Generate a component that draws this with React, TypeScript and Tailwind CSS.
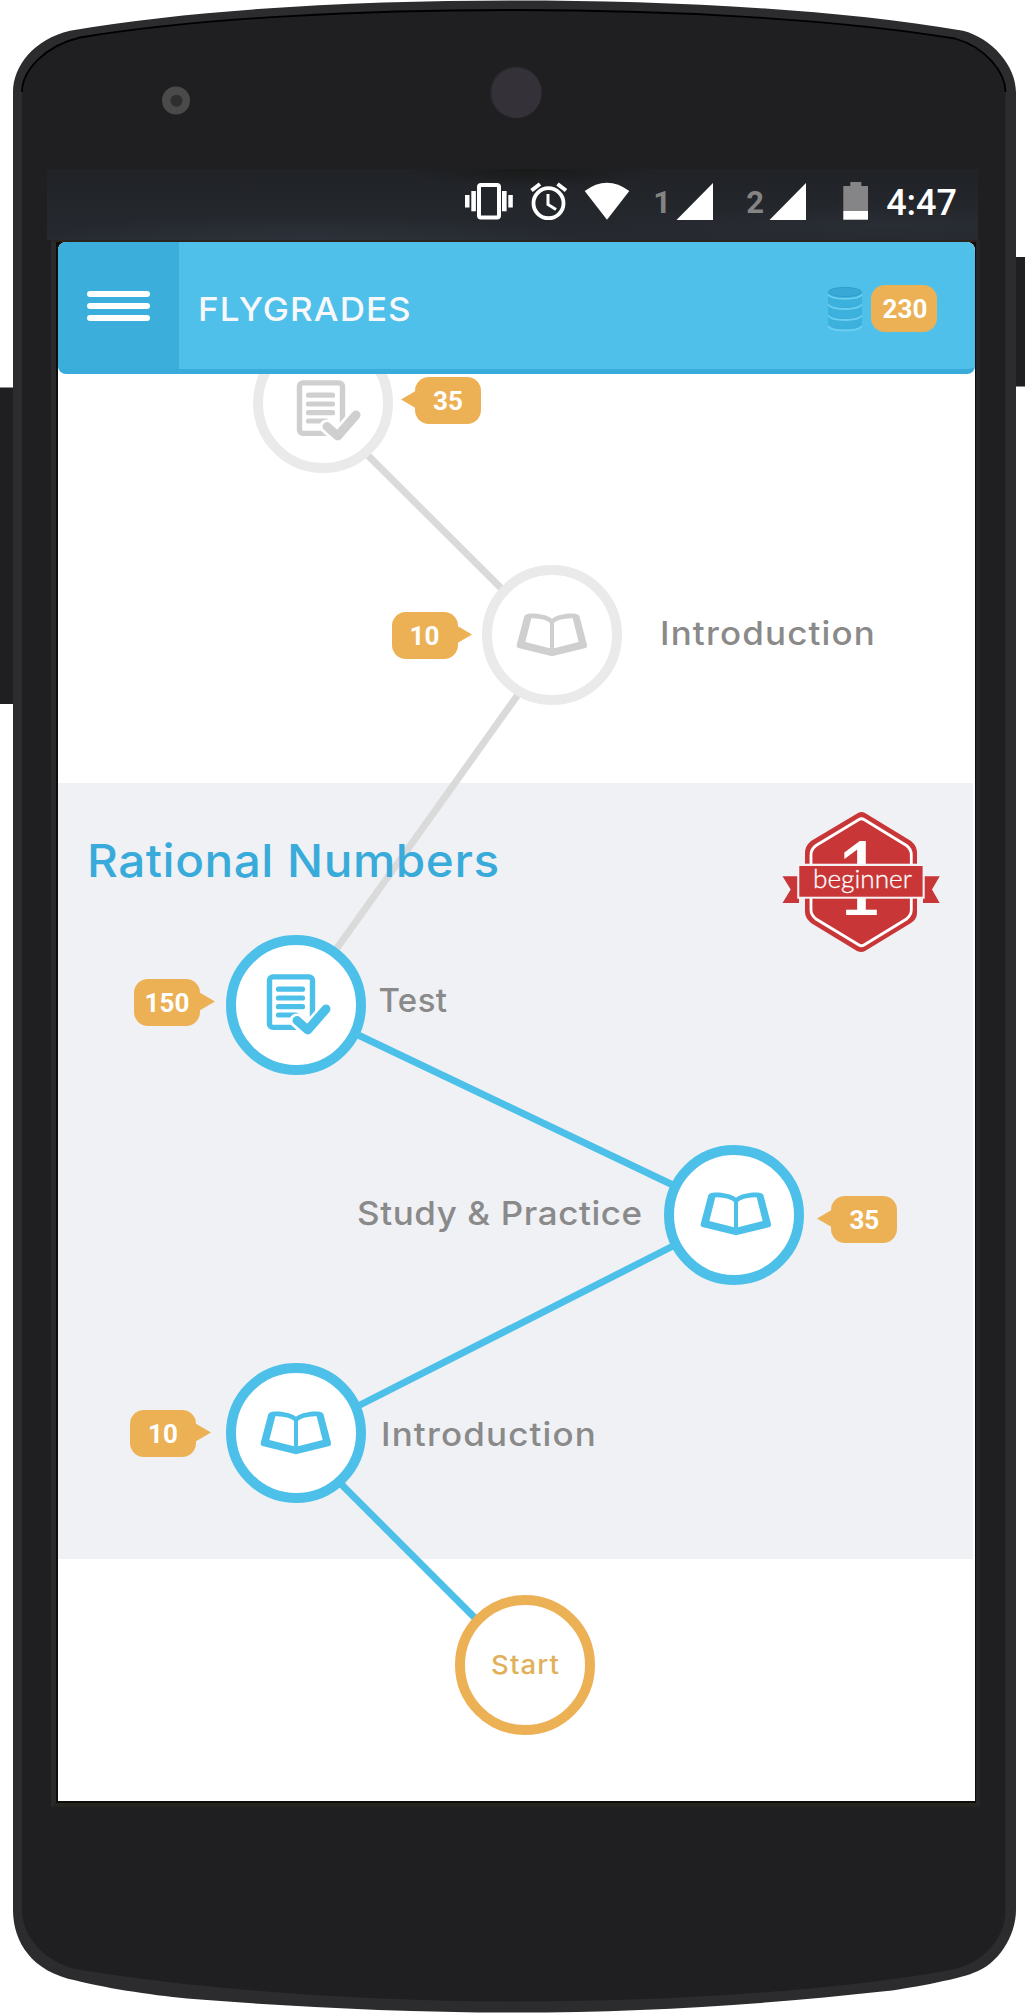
import React from "react";

type Point = { x: number; y: number };

const BLUE = "#4cc0e9";
const LINE_GRAY = "#dadada";

function PhoneBody() {
  return (
    <svg className="absolute inset-0" width="1025" height="2013" viewBox="0 0 1025 2013" aria-hidden="true">
      <rect x="0" y="387.5" width="14" height="316.5" fill="#1f1f21" />
      <rect x="1015" y="257" width="10" height="129.5" fill="#1f1f21" />
      <path
        d="M13 92C13 66 34 39 70 30.7C200 8 370 0.5 515 0.5C660 0.5 830 8 963 30.7C992 38 1016 66 1016 92V1910C1016 1936 998 1965 973 1973C960 1979 900 1990 887 1991C760 2005 640 2012.5 515 2012.5C400 2012.5 280 2006 187 1998.5C150 1995 100 1987 76 1980.5C32 1972 13 1942 13 1910Z"
        fill="#2c2c2e"
      />
      <path
        d="M22 92C22 71 44 46 80 37.5C205 17 370 10 515 10C660 10 830 18 955 38.5C985 47 1005.500 72 1005.500 92V1910C1005.500 1936 986 1962 953 1969.500C830 1992 660 2001.500 515 2001.500C370 2001.500 200 1990 76.700 1969.300C44 1962 22 1936 22 1910Z"
        fill="#1f1f21"
      />
      <path
        d="M22 92C22 71 44 46 80 37.5C205 17 370 10 515 10C660 10 830 18 955 38.5C985 47 1005.500 72 1005.500 92"
        fill="none"
        stroke="#000"
        strokeWidth="1.800"
      />
      <circle cx="516" cy="92.500" r="26" fill="#29282c" />
      <circle cx="516.500" cy="92.700" r="25" fill="#343238" />
      <circle cx="176" cy="100.500" r="14" fill="#4a4a4b" />
      <circle cx="176.500" cy="100.800" r="6" fill="#302e2f" />
    </svg>
  );
}

function SignalIcon() {
  return (
    <svg width="38" height="40" viewBox="0 0 38 40" fill="#fff" aria-hidden="true">
      <path d="M0.500 38L37 1V38Z" />
    </svg>
  );
}

function StatusBar() {
  return (
    <div className="ml-[47px] flex h-[71px] w-[931px] items-start justify-end bg-[radial-gradient(ellipse_at_28%_110%,#2e343c_0%,transparent_30%),radial-gradient(ellipse_at_52%_0%,#181a19_0%,transparent_18%),radial-gradient(ellipse_at_90%_80%,#292d34_0%,transparent_25%),linear-gradient(to_bottom,#202226,#262a30)] pt-[13px] pr-[21px] font-['Roboto']">
      <div className="flex items-start gap-4">
        <svg width="50" height="40" viewBox="465 182 50 40" fill="#fff" aria-hidden="true">
          <rect x="480" y="185" width="20" height="32.500" rx="2" fill="none" stroke="#fff" strokeWidth="4" />
          <rect x="466" y="195" width="4.500" height="12.500" />
          <rect x="472.300" y="191" width="4.600" height="20.300" />
          <rect x="503" y="191" width="4.600" height="20.300" />
          <rect x="509.300" y="195" width="4.500" height="12.500" />
        </svg>
        <svg width="38" height="40" viewBox="531 182 38 40" fill="none" stroke="#fff" aria-hidden="true">
          <circle cx="549.500" cy="203.200" r="15" strokeWidth="3.800" />
          <path d="M532.500 190.500L541 184M558.500 184L567 190.500" strokeWidth="4" />
          <path d="M549 194V204.500L557 209.500" strokeWidth="3" />
        </svg>
        <svg width="46" height="40" viewBox="585 182 46 40" fill="#fff" aria-hidden="true">
          <path d="M585.700 191Q608 174.500 630.300 191L608 219.800Z" />
        </svg>
      </div>
      <div className="ml-[23px] flex gap-[32px]">
        <div className="flex h-[40px] w-[61px] justify-between">
          <span className="mt-[3px] text-[31px] leading-[36px] font-bold text-[#848484]">1</span>
          <SignalIcon />
        </div>
        <div className="flex h-[40px] w-[61px] justify-between">
          <span className="mt-[3px] text-[31px] leading-[36px] font-bold text-[#848484]">2</span>
          <SignalIcon />
        </div>
      </div>
      <div className="ml-[35px] flex gap-[17px]">
        <svg width="27" height="40" viewBox="842 182 27 40" aria-hidden="true">
          <path d="M850.300 182H861.300V186H868V211H843.300V186H850.300Z" fill="#858587" />
          <rect x="843.300" y="211" width="24.700" height="8.700" fill="#fff" />
        </svg>
        <span className="text-[36px] leading-[43px] font-medium whitespace-nowrap text-white">4:47</span>
      </div>
    </div>
  );
}

function Coins() {
  return (
    <svg width="36" height="48" viewBox="0 0 36 48" aria-hidden="true">
      <path d="M1 6V40C4 47 32 47 35 40V6Z" fill="#3cb1de" />
      <path d="M1 19C5 25 31 25 35 19V22H1ZM1 30C5 36 31 36 35 30V33H1Z" fill="#35a8d6" />
      <path
        d="M1 9.500C5 15.200 31 15.200 35 9.500M1 19.500C5 25.500 31 25.500 35 19.500M1 30.500C5 36.500 31 36.500 35 30.500M1 41C5 47 31 47 35 41"
        fill="none"
        stroke="#6dcff0"
        strokeWidth="1.800"
      />
      <ellipse cx="18" cy="7" rx="16.500" ry="4.600" fill="#38a9d7" stroke="#2c9fce" strokeWidth="1" />
    </svg>
  );
}

function Header() {
  return (
    <header className="flex h-[132px] w-full items-stretch overflow-hidden rounded-[8px] border-b-[5px] border-[#39abda] bg-[#4fc0e9]">
      <button aria-label="Menu" className="flex w-[121px] flex-col items-center justify-center gap-[6px] bg-[#3baedc]">
        <span className="h-[6px] w-[63px] rounded-full bg-white" />
        <span className="h-[6px] w-[63px] rounded-full bg-white" />
        <span className="h-[6px] w-[63px] rounded-full bg-white" />
      </button>
      <div className="flex grow items-center justify-between pr-[38px] pb-px pl-[19px]">
        <h1 className="origin-left scale-x-[1.06] pt-[7px] text-[33px] leading-[40px] font-medium tracking-[1px] text-[#f8f8fb]">FLYGRADES</h1>
        <div className="flex items-center gap-[8px] pt-[7px]">
          <Coins />
          <span className="flex h-[47px] w-[66px] items-center justify-center rounded-[14px] bg-[#ecb155] pt-px pl-[2px] font-['Roboto'] text-[26px] font-bold text-white">230</span>
        </div>
      </div>
    </header>
  );
}

function BookIcon({ color }: { color: string }) {
  return (
    <svg width="72" height="44" viewBox="448 213 216 132" fill={color} aria-hidden="true">
      <path
        fillRule="evenodd"
        d="M486 215C505 213 536 216 556 230C576 216 607 213 626 215Q635 216 638 221L661 308Q662 316 657 318L556 343L455 318Q449 316 450 309L473 222Q476 216 486 215ZM494 229L476 300L550 319V243C540 232 510 229 494 229ZM618 229C602 229 572 232 562 243V319L636 300Z"
      />
    </svg>
  );
}

function TestIcon({ color }: { color: string }) {
  return (
    <svg width="66" height="62" viewBox="0 0 66 62" aria-hidden="true">
      <rect x="3.500" y="2.900" width="43" height="50.500" rx="3.500" fill="#fff" stroke={color} strokeWidth="5.400" />
      <path d="M12.500 15.200H36.500M12.500 24H36.500M12.500 32.700H36.500M12.500 41H30" stroke={color} strokeWidth="5.200" strokeLinecap="round" />
      <path d="M30.500 46.500L41.500 56L60 35" fill="none" stroke="#fff" strokeWidth="14" strokeLinecap="round" />
      <path d="M31 46.500L41.700 56L60 35" fill="none" stroke={color} strokeWidth="9" strokeLinecap="round" strokeLinejoin="round" />
    </svg>
  );
}

const rings = {
  blue: "border-[#4cc0e9]",
  gray: "border-[#eaeaea]",
  amber: "border-[#ecb155]",
};

function Node({ at, tone, children }: { at: Point; tone: keyof typeof rings; children?: React.ReactNode }) {
  return (
    <div
      className={`absolute flex size-[140px] -translate-x-1/2 -translate-y-1/2 items-center justify-center rounded-full border-[10px] bg-white ${rings[tone]}`}
      style={{ left: at.x, top: at.y }}
    >
      {children}
    </div>
  );
}

function Points({ at, tip, children }: { at: Point; tip: "left" | "right"; children: React.ReactNode }) {
  return (
    <div className="absolute flex h-[47px] w-[66px] items-center justify-center rounded-[14px] bg-[#ecb155] pt-px font-['Roboto'] text-[26px] font-bold text-white" style={{ left: at.x, top: at.y }}>
      <svg
        className={tip === "left" ? "absolute top-[13px] -left-[14.500px]" : "absolute top-[13px] -right-[14.500px] -scale-x-100"}
        width="17"
        height="19"
        viewBox="0 0 17 19"
        fill="#ecb155"
        aria-hidden="true"
      >
        <path d="M0 9.500L14.500 1H17V18H14.500Z" />
      </svg>
      {children}
    </div>
  );
}

function Label({ at, spacing, children }: { at: Point; spacing: string; children: React.ReactNode }) {
  return (
    <span className={`absolute origin-left text-[33px] leading-[40px] font-medium whitespace-nowrap text-[#8a8a8a] ${spacing}`} style={{ left: at.x, top: at.y }}>
      {children}
    </span>
  );
}

function LevelBadge() {
  return (
    <svg width="160" height="144" viewBox="782 810 160 144" aria-hidden="true">
      <path
        d="M859 813Q862.500 811 866 813L912 841Q918 846 918 853V913Q918 919 912 923L866 951Q862.500 953 858 951L812 923Q806 918 806 912V853Q806 846 812 841Z"
        fill="#c83638"
      />
      <path
        d="M860 819.500Q862.500 818 865 819.500L907.500 845.500Q912.300 849 912.300 855V910Q912.300 915 907.500 919L865 945Q862.500 946.500 860 945L817 919Q812 915 812 910V855Q812 849 817 845.500Z"
        fill="none"
        stroke="#fff"
        strokeWidth="2.800"
      />
      <text x="0" y="0" transform="translate(862.500 915) scale(0.880 1)" textAnchor="middle" fontFamily="DejaVu Serif" fontSize="99" fill="#fff">
        1
      </text>
      <path d="M783.500 876.300H800V903H783.500L791.700 889.500ZM940.700 876.300H924V903H940.700L933 889.500Z" fill="#c83638" />
      <rect x="798.200" y="863.700" width="127.500" height="35" fill="#f5f2f5" />
      <rect x="800.300" y="866" width="123.300" height="30.700" fill="#c83638" />
      <text x="814" y="888.300" fontFamily="Lato" fontSize="24.500" fontWeight="300" textLength="99" lengthAdjust="spacingAndGlyphs" fill="#fff" stroke="#fff" strokeWidth="0.300">
        beginner
      </text>
    </svg>
  );
}

function Path() {
  return (
    <svg className="absolute inset-0" width="917" height="1427" viewBox="0 0 917 1427" fill="none" strokeWidth="7" aria-hidden="true">
      <path d="M303 74.500L448 219M464 315L277 577" stroke={LINE_GRAY} />
      <path d="M298 660L617 812M617 871L298 1033M279 1106L420 1247" stroke={BLUE} />
    </svg>
  );
}

function LearningMap() {
  return (
    <main className="relative flex h-[1427px] w-full flex-col overflow-hidden bg-white pt-[408.500px]">
      <section className="mr-[2px] flex h-[776.500px] items-start justify-between bg-[#f0f1f5] pt-[27px] pr-[32px] pl-[29px]">
        <h2 className="z-10 origin-left scale-x-[1.06] pt-6 text-[45px] leading-[54px] font-medium tracking-[0.5px] whitespace-nowrap text-[#39abda]">
          Rational Numbers
        </h2>
        <LevelBadge />
      </section>

      <Path />

      <Node at={{ x: 265.3, y: 28.6 }} tone="gray">
        <span className="pt-[17px] pl-[11px]">
          <TestIcon color="#cfcfcf" />
        </span>
      </Node>
      <Points at={{ x: 357, y: 3 }} tip="left">35</Points>

      <Node at={{ x: 494.3, y: 260.7 }} tone="gray">
        <BookIcon color="#cfcfcf" />
      </Node>
      <Points at={{ x: 333.5, y: 238 }} tip="right">10</Points>
      <Label at={{ x: 602, y: 239 }} spacing="scale-x-[1.06] tracking-[1.08px]">Introduction</Label>

      <Node at={{ x: 238, y: 630.7 }} tone="blue">
        <span className="pl-[6px]">
          <TestIcon color={BLUE} />
        </span>
      </Node>
      <Points at={{ x: 76, y: 605 }} tip="right">150</Points>
      <Label at={{ x: 320.5, y: 606 }} spacing="tracking-[0.4px]">Test</Label>

      <Node at={{ x: 676.4, y: 841 }} tone="blue">
        <span className="pb-[2px] pl-[3px]">
          <BookIcon color={BLUE} />
        </span>
      </Node>
      <Points at={{ x: 773.3, y: 822 }} tip="left">35</Points>
      <Label at={{ x: 299, y: 819 }} spacing="scale-x-[1.06] tracking-[0.55px]">Study &amp; Practice</Label>

      <Node at={{ x: 238, y: 1059 }} tone="blue">
        <BookIcon color={BLUE} />
      </Node>
      <Points at={{ x: 72, y: 1036 }} tip="right">10</Points>
      <Label at={{ x: 322.7, y: 1040 }} spacing="scale-x-[1.06] tracking-[1.08px]">Introduction</Label>

      <Node at={{ x: 467, y: 1291 }} tone="amber">
        <span className="scale-x-[1.06] pl-px text-[26px] leading-[32px] font-medium tracking-[1px] text-[#e0b05a]">Start</span>
      </Node>
    </main>
  );
}

export default function App() {
  return (
    <div className="relative h-[2013px] w-[1025px] overflow-hidden bg-white font-['Inter',sans-serif]">
      <PhoneBody />
      <div className="relative pt-[169px]">
        <StatusBar />
        <div className="ml-[51px] w-[929px] border-t-[2px] border-r-[4px] border-b-[4px] border-l-[5px] border-t-[#29241f] border-r-[#262627] border-b-[#262520] border-l-[#2a2a2a] bg-[#0d0d0b] pr-[1px] pb-[2px] pl-[2px]">
          <div className="w-[917px] overflow-hidden rounded-t-[8px] bg-white">
            <Header />
            <LearningMap />
          </div>
        </div>
      </div>
    </div>
  );
}
